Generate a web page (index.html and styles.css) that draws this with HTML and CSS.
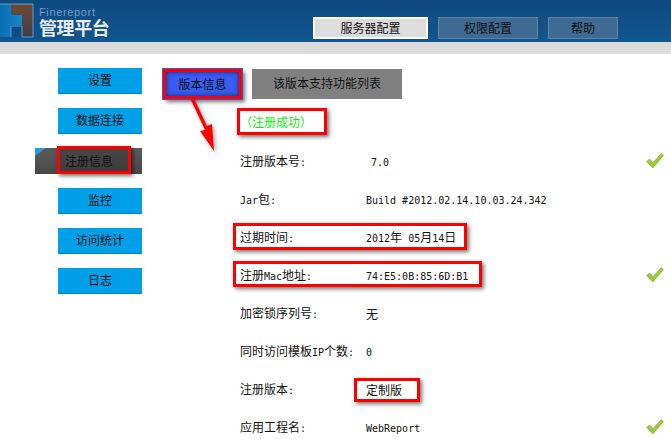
FILE: index.html
```html
<!DOCTYPE html>
<html lang="zh">
<head>
<meta charset="utf-8">
<title>管理平台</title>
<link rel="stylesheet" href="styles.css">
</head>
<body>
<div class="page">
  <header class="topbar">
    <div class="brand">
      <svg class="logo" width="34" height="35" viewBox="0 0 34 35">
        <defs>
          <linearGradient id="logoBlue" x1="0" y1="0" x2="1" y2="0">
            <stop offset="0" stop-color="#0a6db2"/>
            <stop offset="1" stop-color="#1588cf"/>
          </linearGradient>
          <linearGradient id="logoBrown" x1="0" y1="0" x2="0" y2="1">
            <stop offset="0" stop-color="#6e4a32"/>
            <stop offset="1" stop-color="#3d3f4a"/>
          </linearGradient>
        </defs>
        <path d="M0 1H11V12H22V22H11V34H0Z" fill="url(#logoBlue)"/>
        <path d="M11 22H22V34H11Z" fill="#0d4d83"/>
        <path d="M11 1H33V34H22V12H11Z" fill="url(#logoBrown)"/>
        <path d="M0 1H33V34H22V23H11V34" fill="none" stroke="#5f9cc4" stroke-width="1"/>
      </svg>
      <div class="brand-text">
        <span class="brand-en">Finereport</span>
        <span class="brand-zh">管理平台</span>
      </div>
    </div>
    <nav class="topnav">
      <a class="topnav-item topnav-active">服务器配置</a>
      <a class="topnav-item topnav-perm">权限配置</a>
      <a class="topnav-item topnav-help">帮助</a>
    </nav>
  </header>
  <div class="band"></div>
  <main class="main">
    <aside class="side">
      <a class="side-btn">设置</a>
      <a class="side-btn">数据连接</a>
      <a class="side-btn side-current"><span class="side-corner"></span><span class="side-label mark">注册信息</span></a>
      <a class="side-btn">监控</a>
      <a class="side-btn">访问统计</a>
      <a class="side-btn">日志</a>
    </aside>
    <section class="content">
      <div class="tabs">
        <a class="tab tab-on">版本信息</a>
        <a class="tab tab-off">该版本支持功能列表</a>
      </div>
      <div class="status"><span class="status-text mark">（注册成功）</span></div>
      <div class="row"><span class="label">注册版本号<i class="lat">:</i></span><span class="value v-indent"><i class="lat">7.0</i></span><svg class="check" width="18" height="16" viewBox="0 0 18 16"><path d="M0.5 8.5L3.5 6L7 9.5L15.5 0.5L17.5 2.5L7 15Z" fill="#9acb3c" stroke="#7fb02e" stroke-width=".6"/></svg></div>
      <div class="row"><span class="label"><i class="lat">Jar</i>包<i class="lat">:</i></span><span class="value"><i class="lat">Build #2012.02.14.10.03.24.342</i></span></div>
      <div class="row row-marked"><span class="mark mark-date"></span><span class="label">过期时间<i class="lat">:</i></span><span class="value"><i class="lat">2012</i>年<i class="lat">&nbsp;05</i>月<i class="lat">14</i>日</span></div>
      <div class="row row-marked"><span class="mark mark-mac"></span><span class="label">注册<i class="lat">Mac</i>地址<i class="lat">:</i></span><span class="value"><i class="lat">74:E5:0B:85:6D:B1</i></span><svg class="check" width="18" height="16" viewBox="0 0 18 16"><path d="M0.5 8.5L3.5 6L7 9.5L15.5 0.5L17.5 2.5L7 15Z" fill="#9acb3c" stroke="#7fb02e" stroke-width=".6"/></svg></div>
      <div class="row"><span class="label">加密锁序列号<i class="lat">:</i></span><span class="value">无</span></div>
      <div class="row"><span class="label">同时访问模板<i class="lat">IP</i>个数<i class="lat">:</i></span><span class="value"><i class="lat">0</i></span></div>
      <div class="row"><span class="label">注册版本<i class="lat">:</i></span><span class="value"><span class="mark mark-ver">定制版</span></span></div>
      <div class="row"><span class="label">应用工程名<i class="lat">:</i></span><span class="value"><i class="lat">WebReport</i></span><svg class="check" width="18" height="16" viewBox="0 0 18 16"><path d="M0.5 8.5L3.5 6L7 9.5L15.5 0.5L17.5 2.5L7 15Z" fill="#9acb3c" stroke="#7fb02e" stroke-width=".6"/></svg></div>
    </section>
  </main>
  <svg class="arrow" width="30" height="56" viewBox="0 0 30 56">
    <path d="M2 0L6 0L19 28L24 26L26 53L12 33L17 32Z" fill="#f00"/>
  </svg>
</div>
</body>
</html>
```
FILE: styles.css
```css
* { box-sizing: border-box; }
html, body { margin: 0; padding: 0; background: #fff; }
.page {
  position: relative;
  width: 671px;
  height: 439px;
  overflow: hidden;
  font: 12px/16px "Noto Sans CJK SC", "Liberation Sans", sans-serif;
  color: #111;
}
.topbar {
  height: 42px;
  background: linear-gradient(#0f4a80, #12558f);
  display: flex;
  justify-content: space-between;
}
.brand { display: flex; padding-top: 3px; }
.logo { display: block; }
.brand-text { display: flex; flex-direction: column; margin-left: 5px; padding-top: 4px; }
.brand-en { font: 11px/11px "Liberation Sans", sans-serif; color: #6f9cc2; letter-spacing: .65px; }
.brand-zh { font-size: 18px; line-height: 18px; font-weight: 700; color: #e8eef4; letter-spacing: -.4px; }
.topnav { display: flex; gap: 10px; padding: 17px 53px 0 0; }
.topnav-item {
  height: 22px;
  line-height: 19px;
  text-align: center;
  background: #3f6a92;
  border: 1px solid #5d84a8;
}
.topnav-active { width: 115px; background: #dcdcdc; border-color: #fff; border-width: 2px; line-height: 17px; }
.topnav-perm { width: 100px; }
.topnav-help { width: 70px; }
.band { height: 12px; background: #dcdcdc; }
.main { display: flex; padding-top: 14px; }
.side { width: 163px; padding-left: 58px; display: flex; flex-direction: column; gap: 14px; }
.side-btn {
  width: 84px;
  height: 26px;
  line-height: 23px;
  text-align: center;
  background: #00a0e9;
  border-bottom: 1px solid #0a86c6;
  flex: none;
}
.side-current {
  position: relative;
  width: 107px;
  margin-left: -23px;
  background: linear-gradient(#5a5a5a, #4a4a4a);
  border-bottom: 1px solid #3d4a45;
  text-align: left;
}
.side-corner {
  position: absolute;
  left: 0;
  top: 0;
  border-style: solid;
  border-width: 8px 11px 0 0;
  border-color: #2a9be0 transparent transparent transparent;
}
.side-label {
  position: absolute;
  left: 22px;
  top: -2px;
  width: 74px;
  height: 28px;
  line-height: 24px;
  padding-left: 5px;
  background: rgba(50,50,50,.5);
  box-shadow: 2px 2px 4px rgba(0,0,0,.55), inset 0 0 4px rgba(0,0,0,.8);
}
.mark { border: 3px solid #f00; box-shadow: 2px 2px 4px rgba(0,0,0,.55); }
.content { flex: 1; padding-top: 1px; }
.tabs { display: flex; gap: 10px; }
.tab { height: 30px; line-height: 28px; text-align: center; }
.tab-on {
  width: 79px;
  border: 3px solid #f00;
  outline: 1px solid #3358e8;
  background: #3a5cf0;
  box-shadow: 3px 3px 4px rgba(0,0,0,.55), inset 0 0 5px rgba(10,20,90,.8);
  line-height: 24px;
}
.tab-off { width: 150px; background: #808080; }
.status { padding: 9px 0 0 74px; height: 44px; }
.status-text {
  display: block;
  width: 90px;
  height: 27px;
  line-height: 21px;
  color: #0cf00c;
  padding-left: 0;
}
.row {
  position: relative;
  display: flex;
  align-items: center;
  height: 38px;
  padding-left: 77px;
}
.label { width: 126px; flex: none; }
.value { flex: none; }
.v-indent { padding-left: 5px; }
.lat { font: normal 10px/16px "DejaVu Sans Mono", monospace; }
.check { position: absolute; left: 483px; top: 10px; }
.mark-date { position: absolute; left: 70px; top: 4px; width: 234px; height: 27px; }
.mark-mac { position: absolute; left: 70px; top: 4px; width: 249px; height: 26px; }
.mark-ver { display: inline-block; margin-left: -12px; width: 66px; height: 24px; padding-left: 9px; line-height: 17px; }
.arrow { position: absolute; left: 188px; top: 98px; filter: drop-shadow(2px 2px 2px rgba(0,0,0,.35)); }
```
